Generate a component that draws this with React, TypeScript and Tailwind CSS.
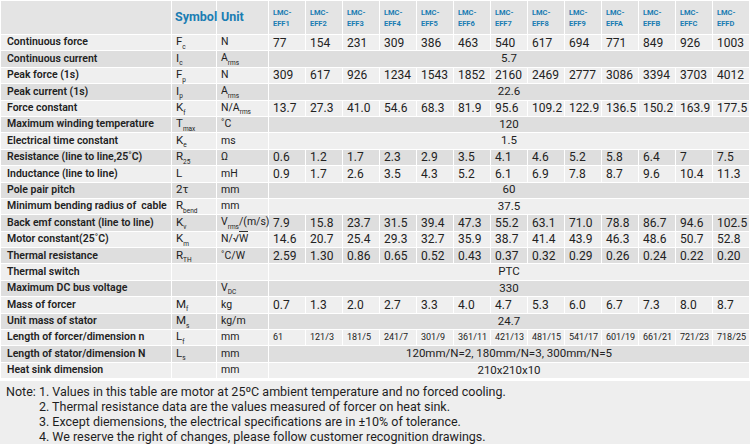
import React from "react";

type Cell = string | number;

type Row = {
  name: string;
  sym: [string, string?];
  unit: React.ReactNode;
  values: Cell[] | string;
  small?: boolean;
};

const COLS = ["1", "2", "3", "4", "5", "6", "7", "8", "9", "A", "B", "C", "D"];

const Sub = ({ base, sub }: { base: string; sub?: string }) => (
  <span>
    {base}
    {sub && <sub className="text-[6.5px] align-[-2px] leading-none">{sub}</sub>}
  </span>
);

const ROWS: Row[] = [
  { name: "Continuous force", sym: ["F", "c"], unit: "N", values: [77, 154, 231, 309, 386, 463, 540, 617, 694, 771, 849, 926, 1003] },
  { name: "Continuous current", sym: ["I", "c"], unit: <Sub base="A" sub="rms" />, values: "5.7" },
  { name: "Peak force (1s)", sym: ["F", "p"], unit: "N", values: [309, 617, 926, 1234, 1543, 1852, 2160, 2469, 2777, 3086, 3394, 3703, 4012] },
  { name: "Peak current (1s)", sym: ["I", "p"], unit: <Sub base="A" sub="rms" />, values: "22.6" },
  { name: "Force constant", sym: ["K", "f"], unit: <Sub base="N/A" sub="rms" />, values: ["13.7", "27.3", "41.0", "54.6", "68.3", "81.9", "95.6", "109.2", "122.9", "136.5", "150.2", "163.9", "177.5"] },
  { name: "Maximum winding temperature", sym: ["T", "max"], unit: "˚C", values: "120" },
  { name: "Electrical time constant", sym: ["K", "e"], unit: "ms", values: "1.5" },
  { name: "Resistance (line to line,25˚C)", sym: ["R", "25"], unit: "Ω", values: ["0.6", "1.2", "1.7", "2.3", "2.9", "3.5", "4.1", "4.6", "5.2", "5.8", "6.4", "7", "7.5"] },
  { name: "Inductance (line to line)", sym: ["L"], unit: "mH", values: ["0.9", "1.7", "2.6", "3.5", "4.3", "5.2", "6.1", "6.9", "7.8", "8.7", "9.6", "10.4", "11.3"] },
  { name: "Pole pair pitch", sym: ["2τ"], unit: "mm", values: "60" },
  { name: "Minimum bending radius of  cable", sym: ["R", "bend"], unit: "mm", values: "37.5" },
  { name: "Back emf constant (line to line)", sym: ["K", "v"], unit: <span><Sub base="V" sub="rms" />/(m/s)</span>, values: ["7.9", "15.8", "23.7", "31.5", "39.4", "47.3", "55.2", "63.1", "71.0", "78.8", "86.7", "94.6", "102.5"] },
  { name: "Motor constant(25˚C)", sym: ["K", "m"], unit: <span>N/√<span className="border-t border-[#333]">W</span></span>, values: ["14.6", "20.7", "25.4", "29.3", "32.7", "35.9", "38.7", "41.4", "43.9", "46.3", "48.6", "50.7", "52.8"] },
  { name: "Thermal resistance", sym: ["R", "TH"], unit: "˚C/W", values: ["2.59", "1.30", "0.86", "0.65", "0.52", "0.43", "0.37", "0.32", "0.29", "0.26", "0.24", "0.22", "0.20"] },
  { name: "Thermal switch", sym: [""], unit: "", values: "PTC" },
  { name: "Maximum DC bus voltage", sym: [""], unit: <Sub base="V" sub="DC" />, values: "330" },
  { name: "Mass of forcer", sym: ["M", "f"], unit: "kg", values: ["0.7", "1.3", "2.0", "2.7", "3.3", "4.0", "4.7", "5.3", "6.0", "6.7", "7.3", "8.0", "8.7"] },
  { name: "Unit mass of stator", sym: ["M", "s"], unit: "kg/m", values: "24.7" },
  { name: "Length of forcer/dimension n", sym: ["L", "f"], unit: "mm", values: ["61", "121/3", "181/5", "241/7", "301/9", "361/11", "421/13", "481/15", "541/17", "601/19", "661/21", "721/23", "718/25"], small: true },
  { name: "Length of stator/dimension N", sym: ["L", "s"], unit: "mm", values: "120mm/N=2, 180mm/N=3, 300mm/N=5" },
  { name: "Heat sink dimension", sym: [""], unit: "mm", values: "210x210x10" },
];

const NOTES = [
  "1. Values in this table are motor at 25ºC ambient temperature and no forced cooling.",
  "2. Thermal resistance data are the values measured of forcer on heat sink.",
  "3. Except diemensions, the electrical specifications are in ±10% of tolerance.",
  "4. We reserve the right of changes, please follow customer recognition drawings.",
];

export default function App() {
  return (
    <div className="w-[750px] h-[444px] bg-white overflow-hidden text-[#222] font-['Roboto','Liberation_Sans',sans-serif]">
      <table className="w-[750px] table-fixed border-collapse">
        <colgroup>
          <col className="w-[171px]" />
          <col className="w-[45px]" />
          <col className="w-[52px]" />
          {COLS.map((c) => (
            <col key={c} className="w-[37px]" />
          ))}
        </colgroup>
        <thead>
          <tr className="h-[34px] bg-[#e4e4e4]">
            <th className="border border-white" />
            <th className="border border-white pl-[3px] text-left text-[12.5px] font-bold text-[#1b7db3] whitespace-nowrap">Symbol</th>
            <th className="border border-white pl-[4px] text-left text-[12.5px] font-bold text-[#1b7db3]">Unit</th>
            {COLS.map((c) => (
              <th key={c} className="border border-white pl-[4px] text-left text-[7.5px] leading-[11px] font-bold text-[#1b7db3]">
                LMC-
                <br />
                EFF{c}
              </th>
            ))}
          </tr>
        </thead>
        <tbody>
          {ROWS.map((r, i) => (
            <tr key={r.name} className={`h-[16.4px] ${i % 2 ? "bg-[#dedede]" : "bg-[#efefef]"}`}>
              <td className="border border-white pl-[6px] text-[10.5px] font-semibold leading-none whitespace-pre truncate">{r.name}</td>
              <td className="border border-white pl-[4px] text-[11.5px] leading-none">
                <Sub base={r.sym[0]} sub={r.sym[1]} />
              </td>
              <td className="border border-white pl-[4px] text-[10.5px] leading-none whitespace-nowrap">{r.unit}</td>
              {typeof r.values === "string" ? (
                <td colSpan={13} className="border border-white text-center text-[11.5px] leading-none">
                  {r.values}
                </td>
              ) : (
                r.values.map((v, j) => (
                  <td
                    key={j}
                    className={`border border-white pl-[4px] leading-none whitespace-nowrap ${r.small ? "text-[9px]" : "text-[12px]"}`}
                  >
                    {v}
                  </td>
                ))
              )}
            </tr>
          ))}
        </tbody>
      </table>
      <div className="mt-[2px] h-[66px] bg-[#eeeeee] flex pl-[6px] pt-[3px] text-[12.5px] leading-[15px] text-[#1e1e1e]">
        <span className="shrink-0 whitespace-pre">Note: </span>
        <div className="flex flex-col">
          {NOTES.map((n, i) => (
            <span key={i}>{n}</span>
          ))}
        </div>
      </div>
    </div>
  );
}
